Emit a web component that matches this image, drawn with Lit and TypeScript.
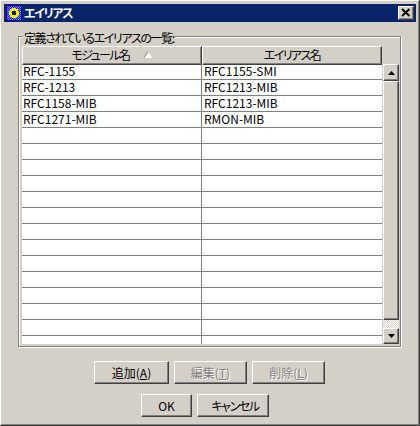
import { LitElement, html, css } from "lit";
import { customElement } from "lit/decorators.js";

const ROWS: [string, string][] = [
  ["RFC-1155", "RFC1155-SMI"],
  ["RFC-1213", "RFC1213-MIB"],
  ["RFC1158-MIB", "RFC1213-MIB"],
  ["RFC1271-MIB", "RMON-MIB"],
  ...Array.from({ length: 14 }, () => ["", ""] as [string, string]),
];

@customElement("app-root")
export class AppRoot extends LitElement {
  static styles = css`
    :host {
      display: block;
      width: 420px;
      height: 426px;
      font-family: "Noto Sans CJK JP", "Liberation Sans", sans-serif;
      font-size: 12px;
      font-feature-settings: "palt";
      color: #000;
    }
    * { box-sizing: border-box; }
    .window {
      width: 420px;
      height: 426px;
      background: #d4d0c8;
      padding: 4px 3px 0 4px;
      display: flex;
      flex-direction: column;
      border-right: 1px solid #404040;
      border-bottom: 1px solid #404040;
      box-shadow: inset 2px 2px 0 -1px #fff, inset -1px -1px 0 #808080;
    }
    .title {
      height: 18px;
      flex: none;
      background: #0a246a;
      color: #fff;
      font-weight: 700;
      display: flex;
      align-items: center;
      padding: 0 2px;
      gap: 2px;
    }
    .title-text { flex: 1; line-height: 18px; letter-spacing: -1.400px; }
    .close {
      width: 16px;
      height: 14px;
      background: #d4d0c8;
      border: 1px solid;
      border-color: #fff #404040 #404040 #fff;
      box-shadow: inset -1px -1px 0 #808080;
      display: flex;
      align-items: center;
      justify-content: center;
    }
    .body {
      flex: 1;
      padding: 14px 14px 0 14px;
      display: flex;
      flex-direction: column;
    }
    .group {
      position: relative;
      height: 311px;
      width: 383px;
      flex: none;
      border: 1px solid #808080;
      box-shadow: inset 1px 1px 0 #fff, 1px 1px 0 #fff;
      padding: 9px 2px 0 3px;
      display: flex;
    }
    .legend {
      position: absolute;
      left: 4px;
      top: -6px;
      background: #d4d0c8;
      padding: 0 1px;
      line-height: 14px;
      height: 14px;
      letter-spacing: -1.400px;
    }
    .table { width: 360px; flex: none; }
    .head { display: grid; grid-template-columns: 180px 180px; height: 18px; }
    .hcell {
      background: #d4d0c8;
      border: 1px solid;
      border-color: #fff #404040 #404040 #fff;
      box-shadow: inset -1px -1px 0 #808080;
      display: flex;
      align-items: center;
      justify-content: center;
      gap: 15px;
      line-height: 15px;
      padding-bottom: 2px;
      letter-spacing: -1.600px;
    }
    .sort { display: block; margin-bottom: 1px; }
    .row { display: grid; grid-template-columns: 180px 180px; height: 16px; background: #fff; border-bottom: 1px solid #808080; }
    .row.last { border-bottom: none; height: 8px; }
    .cell { padding-left: 1px; line-height: 14px; height: 15px; white-space: nowrap; }
    .cell.second { padding-left: 2px; }
    .row.last .cell { height: 8px; }
    .cell.first { border-right: 1px solid #808080; }
    .scroll {
      width: 16px;
      margin-top: 18px;
      height: 280px;
      display: flex;
      flex-direction: column;
      flex: none;
      margin-left: 1px;
    }
    .btn-s, .thumb {
      background: #d4d0c8;
      border: 1px solid;
      border-color: #fff #404040 #404040 #fff;
      box-shadow: inset -1px -1px 0 #808080;
      flex: none;
    }
    .btn-s { height: 16px; display: flex; align-items: center; justify-content: center; }
    .btn-s.up { height: 17px; }
    .thumb { height: 239px; }
    .track {
      flex: 1;
      background-color: #fff;
      background-image: conic-gradient(#d4d0c8 25%, #fff 0 50%, #d4d0c8 0 75%, #fff 0);
      background-size: 2px 2px;
    }
    .actions { display: flex; gap: 5px; margin-top: 14px; padding-left: 76px; }
    .actions.second { margin-top: 10px; padding-left: 123px; }
    .btn {
      height: 23px;
      width: 73px;
      background: #d4d0c8;
      border: 1px solid;
      border-color: #fff #404040 #404040 #fff;
      box-shadow: inset -1px -1px 0 #808080;
      display: flex;
      align-items: center;
      justify-content: center;
      line-height: 14px;
    }
    .btn.add { width: 75px; }
    .btn.ok { width: 51px; }
    .btn.cancel { width: 72px; letter-spacing: -1.400px; padding-left: 4px; }
    .btn.off { color: #808080; text-shadow: 1px 1px 0 #fff; }
    u { text-underline-offset: 1px; }
  `;

  render() {
    return html`
      <div class="window">
        <div class="title">
          <svg width="16" height="16" viewBox="0 0 16 16" shape-rendering="crispEdges">
            <defs>
              <pattern id="dots" width="2" height="2" patternUnits="userSpaceOnUse">
                <rect width="2" height="2" fill="#1818e8" />
                <rect width="1" height="1" fill="#20c8f0" />
                <rect x="1" y="1" width="1" height="1" fill="#e838e8" />
              </pattern>
            </defs>
            <rect width="16" height="16" fill="#0808a0" />
            <rect x="1" y="1" width="14" height="14" fill="url(#dots)" />
            <path d="M6 3h4v1h2v2h1v4h-1v2h-2v1H6v-1H4v-2H3V6h1V4h2z" fill="#f4f000" />
            <rect x="6" y="6" width="4" height="4" fill="#101060" />
          </svg>
          <span class="title-text">エイリアス</span>
          <span class="close">
            <svg width="10" height="10" viewBox="0 0 10 10"><path d="M1 1l7.500 7M8.500 1L1 8" stroke="#000" stroke-width="1.900" fill="none" /></svg>
          </span>
        </div>
        <div class="body">
          <div class="group">
            <span class="legend">定義されているエイリアスの一覧:</span>
            <div class="table">
              <div class="head">
                <div class="hcell">
                  <span>モジュール名</span>
                  <svg class="sort" width="8" height="7" viewBox="0 0 8 7"><path d="M4 0L0 7h8z" fill="#fff" /><path d="M4 .5L.5 6.500" stroke="#808080" fill="none" /></svg>
                </div>
                <div class="hcell">エイリアス名</div>
              </div>
              ${ROWS.map(
                (r, i) => html`<div class="row ${i === ROWS.length - 1 ? "last" : ""}"><div class="cell first">${r[0]}</div><div class="cell second">${r[1]}</div></div>`
              )}
            </div>
            <div class="scroll">
              <div class="btn-s up"><svg width="7" height="4" viewBox="0 0 7 4"><path d="M3.500 0L7 4H0z" fill="#000" /></svg></div>
              <div class="thumb"></div>
              <div class="track"></div>
              <div class="btn-s"><svg width="7" height="4" viewBox="0 0 7 4"><path d="M0 0h7L3.500 4z" fill="#000" /></svg></div>
            </div>
          </div>
          <div class="actions">
            <div class="btn add">追加(<u>A</u>)</div>
            <div class="btn off">編集(<u>T</u>)</div>
            <div class="btn off">削除(<u>L</u>)</div>
          </div>
          <div class="actions second">
            <div class="btn ok">OK</div>
            <div class="btn cancel">キャンセル</div>
          </div>
        </div>
      </div>
    `;
  }
}
